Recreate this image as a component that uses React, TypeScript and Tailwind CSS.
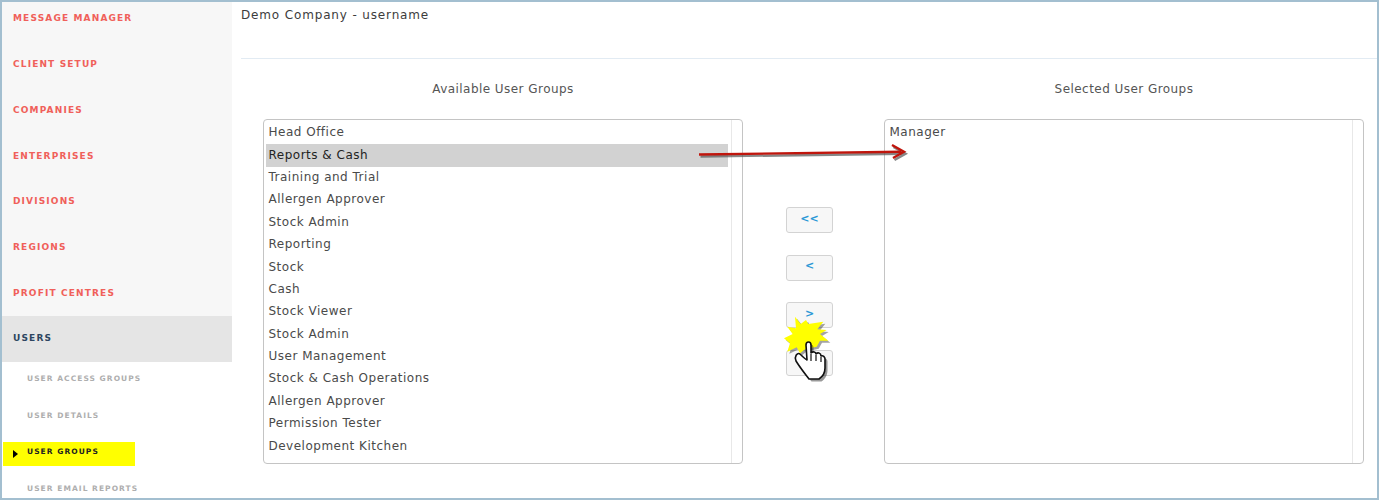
const menu = ["CLIENT SETUP", "COMPANIES", "ENTERPRISES", "DIVISIONS", "REGIONS", "PROFIT CENTRES"];
const groups = ["Head Office", "Reports & Cash", "Training and Trial", "Allergen Approver", "Stock Admin", "Reporting", "Stock", "Cash", "Stock Viewer", "Stock Admin", "User Management", "Stock & Cash Operations", "Allergen Approver", "Permission Tester", "Development Kitchen"];
const font = "font-['DejaVu_Sans',sans-serif]";
const star = "M15 2.7 L20.7 10 L26 6 L28.3 10 L43.3 7.7 L37.3 15.3 L46.7 16 L40 20 L48.3 26.7 L40 26.7 L36.7 32.7 L25 35.3 L20 39.3 L16.7 33.3 L7.3 37.7 L10 29.3 L4 24.3 L12.7 20 L7.3 12.7 L16 14.3 Z";
const hand = "M20 37 C22 39 25 42 27 43 L26 28 C26 24 31 24 31 28 L31 36 C33 34 36 35 36 37 C38 35 41 36 41 39 C43 38 45 40 45 42 L45 51 C45 56 42 60 39 62 L29 62 C26 58 21 52 16 44 C14 40 17 35 20 37 Z";

function SubItem({ label }: { label: string }) {
  return (
    <div className="flex h-[36.8px] items-center pl-[25px] pb-[4px] text-[7.5px] font-bold tracking-[1.05px] text-[#aeaeae]">{label}</div>
  );
}

function ListBox({ items, selected }: { items: string[]; selected?: number }) {
  return (
    <div className="flex h-[345px] w-[480px] rounded-[4px] border border-[#c4c4c4]">
      <div className="flex-1 pl-[2px] pt-[2px] pr-[3px]">
        {items.map((g, i) => (
          <div key={i} className={`flex h-[22.4px] items-center pb-[2px] pl-[2.5px] text-[12px] tracking-[0.5px] ${i === selected ? "bg-[#d2d2d2] text-[#222]" : "text-[#4a4a4a]"}`}>
            {g}
          </div>
        ))}
      </div>
      <div className="w-[11px] border-l border-[#e8e8e8]" />
    </div>
  );
}

function MoveButton({ label }: { label: string }) {
  return (
    <button className="flex h-[26px] w-[47px] items-center justify-center rounded-[3px] border border-[#d3d3d3] bg-[#f7f7f7] pb-[2px] text-[11px] font-bold text-[#2a97d6]">
      {label}
    </button>
  );
}

export default function App() {
  return (
    <div className={`relative flex h-[500px] w-[1379px] overflow-hidden border-2 border-[#a3bfd0] bg-white ${font}`}>
      <aside className="w-[230px] shrink-0">
        <div className="bg-[#f7f7f7]">
          <div className="flex h-[39.2px] items-center pb-[6px] pl-[11px] text-[9px] font-bold tracking-[1.15px] text-[#f0605a]">MESSAGE MANAGER</div>
          {menu.map((m) => (
            <div key={m} className="flex h-[45.83px] items-center pt-[1px] pl-[11px] text-[9px] font-bold tracking-[1.15px] text-[#f0605a]">
              {m}
            </div>
          ))}
        </div>
        <div className="flex h-[46px] items-center bg-[#e5e5e5] pl-[11px] text-[9px] font-bold tracking-[1.15px] text-[#2d4560]">USERS</div>
        <SubItem label="USER ACCESS GROUPS" />
        <SubItem label="USER DETAILS" />
        <div className="my-[6px] ml-[1px] flex h-[24px] w-[132px] items-center gap-[9px] bg-[#ffff00] pl-[10px] text-[7.5px] font-bold tracking-[1.05px] text-[#222]">
          <span className="mt-[1px] h-0 w-0 border-y-[4.5px] border-l-[5px] border-y-transparent border-l-black" />
          <span className="-mt-[4px]">USER GROUPS</span>
        </div>
        <SubItem label="USER EMAIL REPORTS" />
      </aside>

      <main className="flex-1 pl-[9px]">
        <div className="h-[57px] border-b border-[#e2ebf3] pt-[5px] text-[12px] leading-[16px] tracking-[0.85px] text-[#3c3c3c]">Demo Company - username</div>
        <div className="flex pl-[22px] pt-[22px]">
          <section>
            <div className="mb-[21px] text-center text-[12px] leading-[17px] tracking-[0.45px] text-[#555]">Available User Groups</div>
            <ListBox items={groups} selected={1} />
          </section>
          <div className="ml-[43px] mt-[126px] flex w-[47px] flex-col gap-[21.7px]">
            <MoveButton label="<<" />
            <MoveButton label="<" />
            <MoveButton label=">" />
            <MoveButton label="" />
          </div>
          <section className="ml-[51px]">
            <div className="mb-[21px] text-center text-[12px] leading-[17px] tracking-[0.45px] text-[#555]">Selected User Groups</div>
            <ListBox items={["Manager"]} />
          </section>
        </div>
      </main>

      <svg className="absolute left-[677px] top-[128px]" width="240" height="40" viewBox="0 0 240 40" fill="none">
        <g stroke="#555" strokeWidth="2.5" opacity="0.7" transform="translate(1.5 2)">
          <path d="M20 24.5 L222 21.7" />
          <path d="M213 15 L225 21.7 L214 28" />
        </g>
        <g stroke="#c0150c" strokeWidth="2.4">
          <path d="M20 24.5 L222 21.7" />
          <path d="M213 15 L225 21.7 L214 28" />
        </g>
      </svg>

      <svg className="absolute left-[778px] top-[312px]" width="60" height="70" viewBox="0 0 60 70">
        <path d={star} fill="#333" opacity="0.45" transform="translate(2 2)" />
        <path d={star} fill="#ffff00" />
        <g transform="translate(0 3)">
          <path d={hand} fill="#000" opacity="0.4" transform="translate(2.5 2.5)" />
          <path d={hand} fill="#fff" stroke="#111" strokeWidth="1.6" strokeLinejoin="round" />
          <path d="M31 37 L31 44 M36 38 L36 44 M41 40 L41 45" stroke="#111" strokeWidth="1.2" />
        </g>
      </svg>
    </div>
  );
}
